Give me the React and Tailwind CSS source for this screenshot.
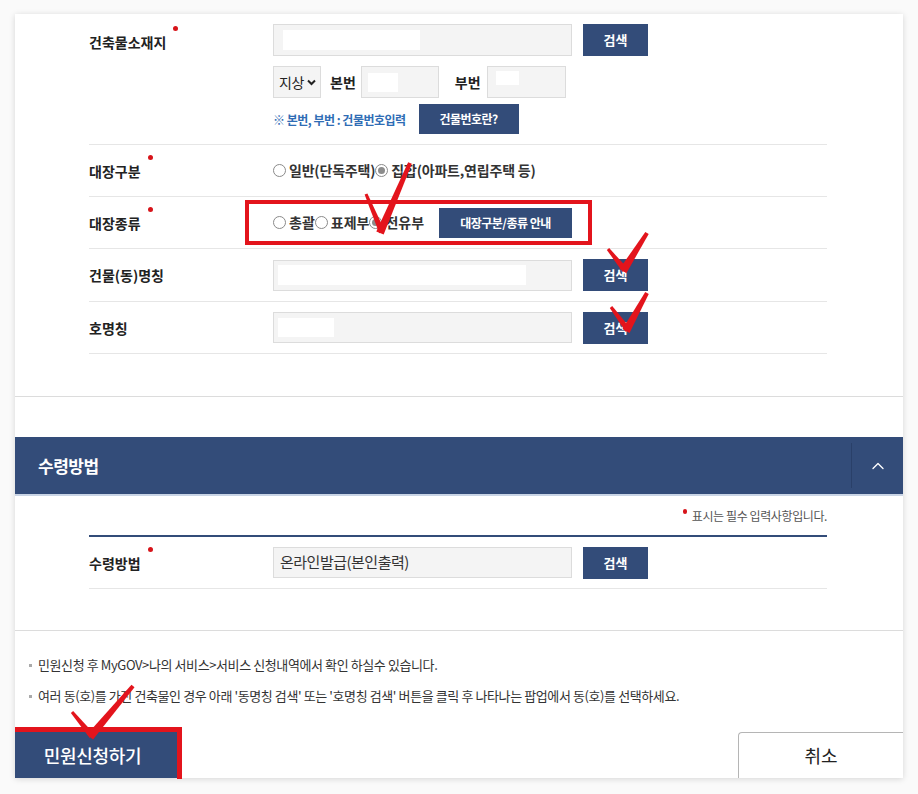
import { ChevronUp } from 'lucide-react';

const navy = 'bg-[#334c79]';

const Dot = () => (
  <span className="ml-[7px] mt-[-6px] inline-block w-[5px] h-[5px] rounded-full bg-[#d7141a]" />
);

const Label = ({ children, required }) => (
  <div className="w-[184px] shrink-0 flex items-start">
    <span className="text-[14px] leading-[20px] font-bold text-[#222]">{children}</span>
    {required && <Dot />}
  </div>
);

const Radio = ({ checked }) => (
  <span className="inline-flex w-[13px] h-[13px] rounded-full border border-[#8a8a8a] bg-white items-center justify-center mr-[3px] shrink-0">
    {checked && <span className="w-[7px] h-[7px] rounded-full bg-[#8c8c8c]" />}
  </span>
);

const SearchBtn = ({ h = 'h-[32px]' }) => (
  <button className={`${navy} ${h} w-[65px] text-white text-[13px] font-bold`}>검색</button>
);

const Field = ({ children, w = 'w-[299px]', h = 'h-[32px]' }) => (
  <div className={`${w} ${h} bg-[#f4f4f4] border border-[#dcdcdc] flex items-center`}>{children}</div>
);

const Blank = ({ className }) => <span className={`block bg-white ${className}`} />;

// red annotation strokes: tapered check marks
const seg = (a, b, w0, w1) => {
  const dx = b[0] - a[0];
  const dy = b[1] - a[1];
  const len = Math.hypot(dx, dy);
  const nx = -dy / len;
  const ny = dx / len;
  return [
    [a[0] + (nx * w0) / 2, a[1] + (ny * w0) / 2],
    [b[0] + (nx * w1) / 2, b[1] + (ny * w1) / 2],
    [b[0] - (nx * w1) / 2, b[1] - (ny * w1) / 2],
    [a[0] - (nx * w0) / 2, a[1] - (ny * w0) / 2],
  ]
    .map((p) => p.join(','))
    .join(' ');
};

const Check = ({ l, t, r }) => (
  <g fill="#e3141c">
    <polygon points={seg(l, [t[0] + 1, t[1] + 1], 3, 6)} />
    <polygon points={seg([t[0] - 1, t[1] + 2], r, 8, 4)} />
  </g>
);

export default function App() {
  return (
    <div
      className="relative w-[918px] h-[794px] bg-[#fafafa] overflow-hidden pt-[14px]"
      style={{ fontFamily: '"Noto Sans CJK KR", "Noto Sans", sans-serif' }}
    >
      <div className="mx-[15px] bg-white shadow-[0_1px_6px_rgba(0,0,0,0.15)]">
        {/* 건축물 정보 */}
        <div className="border-b border-[#dcdcdc] pb-[42px]">
          <div className="pl-[74px] pr-[76px]">
            <div className="flex border-b border-[#e6e6e6] py-[10px]">
              <div className="pt-[8px]">
                <Label required>건축물소재지</Label>
              </div>
              <div className="flex flex-col">
                <div className="flex gap-[11px]">
                  <Field>
                    <Blank className="ml-[9px] w-[137px] h-[20px]" />
                  </Field>
                  <SearchBtn />
                </div>
                <div className="flex items-center mt-[10px] text-[14px] text-[#222]">
                  <div className="w-[48px] h-[32px] bg-[#f4f4f4] border border-[#dcdcdc] flex items-center pl-[5px] gap-[3px]">
                    <span className="tracking-[-0.5px]">지상</span>
                    <svg width="9" height="7" viewBox="0 0 9 7">
                      <path d="M1 1.5 L4.5 5 L8 1.5" stroke="#222" strokeWidth="2" fill="none" />
                    </svg>
                  </div>
                  <span className="ml-[9px] mr-[5px] font-bold">본번</span>
                  <Field w="w-[78px]">
                    <Blank className="ml-[6px] w-[30px] h-[19px]" />
                  </Field>
                  <span className="ml-[16px] mr-[6px] font-bold">부번</span>
                  <Field w="w-[79px]">
                    <Blank className="ml-[8px] mb-[8px] w-[23px] h-[14px]" />
                  </Field>
                </div>
                <div className="flex items-center mt-[6px]">
                  <span className="text-[12px] font-bold tracking-[-0.5px] text-[#2f6db5] pt-[1px]">
                    ※ 본번, 부번 : 건물번호입력
                  </span>
                  <button className={`${navy} ml-[13px] h-[30px] w-[100px] text-white text-[12px] font-bold tracking-[-0.5px]`}>
                    건물번호란?
                  </button>
                </div>
              </div>
            </div>

            <div className="flex items-center h-[52px] border-b border-[#e6e6e6]">
              <Label required>대장구분</Label>
              <div className="flex items-center text-[14px] font-bold tracking-[-0.2px] text-[#333]">
                <Radio />
                <span>일반(단독주택)</span>
                <Radio checked />
                <span>집합(아파트,연립주택 등)</span>
              </div>
            </div>

            <div className="flex items-center h-[52px] border-b border-[#e6e6e6]">
              <Label required>대장종류</Label>
              <div className="flex items-center text-[14px] font-bold text-[#333]">
                <Radio />
                <span>총괄</span>
                <Radio />
                <span>표제부</span>
                <Radio checked />
                <span>전유부</span>
                <button className={`${navy} ml-[15px] h-[30px] w-[133px] text-white text-[12px] font-bold tracking-[-0.5px]`}>
                  대장구분/종류 안내
                </button>
              </div>
            </div>

            <div className="flex items-center h-[53px] border-b border-[#e6e6e6]">
              <Label>건물(동)명칭</Label>
              <div className="flex items-center gap-[11px]">
                <Field h="h-[31px]">
                  <Blank className="ml-[4px] w-[248px] h-[20px]" />
                </Field>
                <SearchBtn />
              </div>
            </div>

            <div className="flex items-center h-[52px] border-b border-[#e6e6e6]">
              <Label>호명칭</Label>
              <div className="flex items-center gap-[11px]">
                <Field h="h-[31px]">
                  <Blank className="ml-[4px] w-[56px] h-[19px]" />
                </Field>
                <SearchBtn />
              </div>
            </div>
          </div>
        </div>

        {/* 수령방법 */}
        <div className="pt-[40px] border-b border-[#dcdcdc] pb-[41px]">
          <div className={`${navy} h-[59px] flex items-center border-b-2 border-[#c9d4e5]`}>
            <span className="flex-1 pl-[23px] text-white text-[17px] font-bold tracking-[-0.5px]">수령방법</span>
            <span className="w-px h-[45px] bg-[#2a4069]" />
            <span className="w-[51px] flex justify-center">
              <ChevronUp size={20} strokeWidth={1.6} className="text-white" />
            </span>
          </div>
          <div className="pl-[74px] pr-[76px]">
            <div className="h-[39px] flex items-center justify-end text-[12px] text-[#555] tracking-[-0.4px]">
              <span className="w-[4px] h-[5px] rounded-full bg-[#d7141a] mr-[5px] mt-[-9px]" />
              표시는 필수 입력사항입니다.
            </div>
            <div className="h-[2px] bg-[#334c79]" />
            <div className="flex items-center h-[52px] border-b border-[#e6e6e6]">
              <Label required>수령방법</Label>
              <div className="flex items-center gap-[11px]">
                <Field h="h-[31px]">
                  <span className="pl-[6px] text-[15px] text-[#333] tracking-[-0.5px]">온라인발급(본인출력)</span>
                </Field>
                <SearchBtn />
              </div>
            </div>
          </div>
        </div>

        {/* 안내 */}
        <div className="pt-[24px] pl-[14px] flex flex-col gap-[11px] text-[13px] text-[#333] tracking-[-0.4px]">
          <div className="flex items-center h-[20px]">
            <span className="w-[3px] h-[3px] bg-[#aaa] mr-[6px]" />
            민원신청 후 MyGOV&gt;나의 서비스&gt;서비스 신청내역에서 확인 하실수 있습니다.
          </div>
          <div className="flex items-center h-[20px]">
            <span className="w-[3px] h-[3px] bg-[#aaa] mr-[6px]" />
            여러 동(호)를 가진 건축물인 경우 아래 '동명칭 검색' 또는 '호명칭 검색' 버튼을 클릭 후 나타나는 팝업에서 동(호)를 선택하세요.
          </div>
        </div>

        <div className="mt-[26px] flex justify-between h-[46px]">
          <button className={`${navy} w-[163px] text-white text-[18px] font-medium tracking-[-0.3px] pr-[8px]`}>
            민원신청하기
          </button>
          <button className="w-[165px] bg-white border-t border-l border-[#b5b5b5] rounded-tl-[4px] text-[18px] text-[#222]">
            취소
          </button>
        </div>
      </div>

      {/* 빨간 표시 */}
      <svg className="absolute inset-0 pointer-events-none" width="918" height="794">
        <rect x="247" y="202" width="343" height="41" fill="none" stroke="#e3141c" strokeWidth="4" />
        <path d="M15 729.5 H179.5 V779" fill="none" stroke="#e3141c" strokeWidth="5" />
        <Check l={[366, 194]} t={[381, 231]} r={[410, 163]} />
        <Check l={[608, 249]} t={[624, 269]} r={[647, 233]} />
        <Check l={[611, 307]} t={[627, 329]} r={[647, 293]} />
        <Check l={[72, 712]} t={[91, 735]} r={[133, 686]} />
      </svg>
    </div>
  );
}
